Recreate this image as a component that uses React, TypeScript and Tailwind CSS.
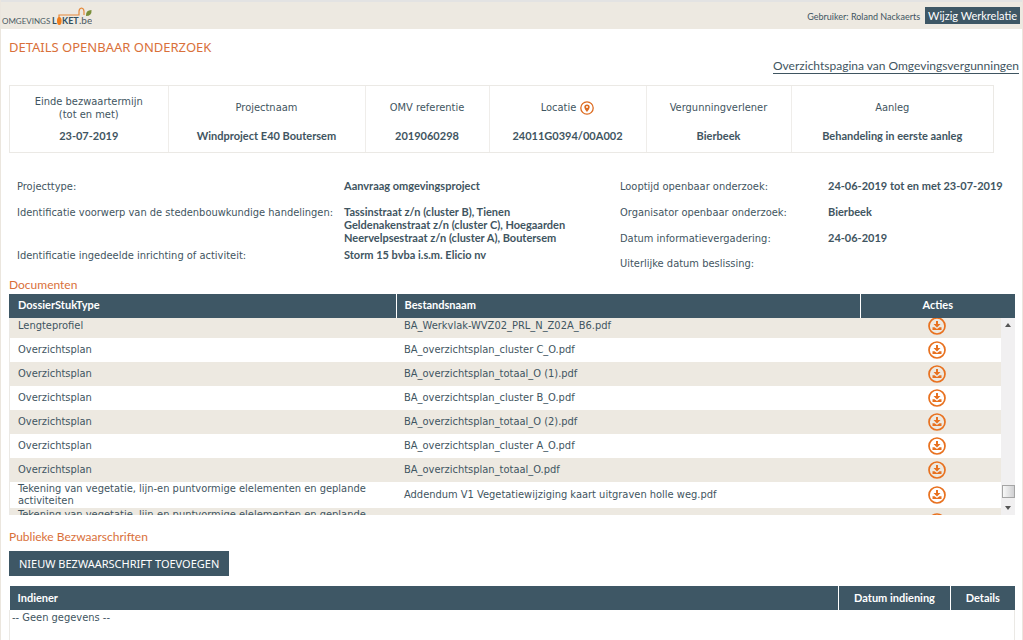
import type { ReactNode } from 'react';

const summary: { label: ReactNode; value: string; width: string }[] = [
  { label: <>Einde bezwaartermijn<br />(tot en met)</>, value: '23-07-2019', width: 'w-[158px]' },
  { label: 'Projectnaam', value: 'Windproject E40 Boutersem', width: 'w-[197px]' },
  { label: 'OMV referentie', value: '2019060298', width: 'w-[124px]' },
  {
    label: (
      <span className="inline-flex items-center gap-1">
        Locatie <PinIcon />
      </span>
    ),
    value: '24011G0394/00A002',
    width: 'w-[157px]',
  },
  { label: 'Vergunningverlener', value: 'Bierbeek', width: 'w-[145px]' },
  { label: 'Aanleg', value: 'Behandeling in eerste aanleg', width: 'w-[202px]' },
];

const documents = [
  { type: 'Lengteprofiel', name: 'BA_Werkvlak-WVZ02_PRL_N_Z02A_B6.pdf' },
  { type: 'Overzichtsplan', name: 'BA_overzichtsplan_cluster C_O.pdf' },
  { type: 'Overzichtsplan', name: 'BA_overzichtsplan_totaal_O (1).pdf' },
  { type: 'Overzichtsplan', name: 'BA_overzichtsplan_cluster B_O.pdf' },
  { type: 'Overzichtsplan', name: 'BA_overzichtsplan_totaal_O (2).pdf' },
  { type: 'Overzichtsplan', name: 'BA_overzichtsplan_cluster A_O.pdf' },
  { type: 'Overzichtsplan', name: 'BA_overzichtsplan_totaal_O.pdf' },
  {
    type: 'Tekening van vegetatie, lijn-en puntvormige elelementen en geplande activiteiten',
    name: 'Addendum V1 Vegetatiewijziging kaart uitgraven holle weg.pdf',
  },
];

function PinIcon() {
  return (
    <svg width="14" height="14" viewBox="0 0 14 14" aria-hidden="true">
      <circle cx="7" cy="7" r="6.2" fill="none" stroke="#dd6b20" strokeWidth="1.3" />
      <path fillRule="evenodd" fill="#dd6b20" d="M7 3.4a2.7 2.7 0 0 0-2.7 2.7C4.3 8 7 11 7 11s2.7-3 2.7-4.9A2.7 2.7 0 0 0 7 3.4zm0 1.7a1 1 0 1 1 0 2 1 1 0 0 1 0-2z" />
    </svg>
  );
}

function DownloadIcon() {
  return (
    <svg width="18" height="18" viewBox="0 0 18 18" aria-hidden="true">
      <circle cx="9" cy="9" r="8" fill="none" stroke="#e8711f" strokeWidth="1.7" />
      <path fill="#e8711f" d="M8 4h2v3h2.5L9 10.5 5.5 7H8z" />
      <path fill="#e8711f" d="M4.5 10.3h2L9 12l2.500-1.700h2V13h-9z" />
    </svg>
  );
}

function DownloadButton() {
  return (
    <button type="button" aria-label="Download" className="mx-auto block">
      <DownloadIcon />
    </button>
  );
}

function Logo() {
  return (
    <svg width="92" height="20" viewBox="0 0 92 20" role="img" aria-label="Omgevingsloket.be">
      <text x="2" y="17" fontSize="8" fill="#4b5b63">OMGEVINGS</text>
      <text x="52" y="17" fontSize="9" fontWeight="700" fill="#33505e">L</text>
      <text x="62" y="17" fontSize="9" fontWeight="700" fill="#33505e">KET</text>
      <text x="79" y="17" fontSize="10" fill="#4b5b63">.be</text>
      <path d="M59 12V8h20V4.5q0-3 2.5-3.5 2.5.5 2.5 3.5V8" fill="none" stroke="#e58a3c" strokeWidth="1.2" />
      <ellipse cx="59.3" cy="14" rx="2.3" ry="4" fill="#f07d1a" />
      <path d="M86 9q-.5-6 5.5-6 .5 6-5.5 6z" fill="#7a8f3a" />
    </svg>
  );
}

function Detail({ label, value, grid }: { label: string; value?: ReactNode; grid: string }) {
  return (
    <div className={`grid items-baseline ${grid}`}>
      <dt>{label}</dt>
      <dd className="font-['Lato',sans-serif] font-bold">{value}</dd>
    </div>
  );
}

const leftGrid = 'grid-cols-[327px_1fr]';
const rightGrid = 'grid-cols-[208px_1fr]';

export default function App() {
  return (
    <div className="min-h-screen border-x border-[#ebe6de] bg-white font-['DejaVu_Sans_Condensed','DejaVu_Sans',sans-serif] text-[11px] leading-[13px] text-[#3f5561]">
      <header className="flex h-[29px] items-center justify-between border-t-2 border-[#e3e3e3] bg-[#ede9e1] pr-[2px] font-['Lato',sans-serif]">
        <a href="#home" className="-ml-px pt-[2px]"><Logo /></a>
        <div className="flex items-center gap-[5px]">
          <span className="pt-[2px] text-[9px]">Gebruiker: Roland Nackaerts</span>
          <button type="button" className="h-[17px] bg-[#3e5765] px-[3px] text-[11px] text-white">Wijzig Werkrelatie</button>
        </div>
      </header>

      <main className="pl-2 pr-[7px]">
        <h1 className="pt-[10px] font-['Noto_Sans',sans-serif] text-[13px] leading-4 text-[#d9703a]">DETAILS OPENBAAR ONDERZOEK</h1>
        <div className="-mr-1 mt-1 text-right">
          <a href="#overzicht" className="inline-block border-b border-[#3f5561] font-['Lato',sans-serif] text-[12px] leading-[14px]">
            Overzichtspagina van Omgevingsvergunningen
          </a>
        </div>

        <div className="mr-[21px] mt-[11px] h-[68px] border border-[#ebe9e5]">
          <table className="w-full table-fixed text-center">
            <thead>
              <tr className="h-[43px]">
                {summary.map((s, i) => (
                  <th key={i} className={`${s.width} border-r border-[#efedea] p-0 font-normal last:border-r-0`}>{s.label}</th>
                ))}
              </tr>
            </thead>
            <tbody>
              <tr className="h-[23px] font-['Lato',sans-serif]">
                {summary.map((s, i) => (
                  <td key={i} className="whitespace-nowrap border-r border-[#efedea] p-0 pb-[10px] font-bold last:border-r-0">{s.value}</td>
                ))}
              </tr>
            </tbody>
          </table>
        </div>

        <div className="mt-[26px] grid h-[91px] grid-cols-[603fr_395fr] pl-2">
          <dl className="flex flex-col gap-3">
            <Detail grid={leftGrid} label="Projecttype:" value="Aanvraag omgevingsproject" />
            <Detail
              grid={leftGrid}
              label="Identificatie voorwerp van de stedenbouwkundige handelingen:"
              value={<>Tassinstraat z/n (cluster B), Tienen<br />Geldenakenstraat z/n (cluster C), Hoegaarden<br />Neervelpsestraat z/n (cluster A), Boutersem</>}
            />
            <div className="-mt-2">
              <Detail grid={leftGrid} label="Identificatie ingedeelde inrichting of activiteit:" value="Storm 15 bvba i.s.m. Elicio nv" />
            </div>
          </dl>
          <dl className="flex flex-col gap-3">
            <Detail grid={rightGrid} label="Looptijd openbaar onderzoek:" value="24-06-2019 tot en met 23-07-2019" />
            <Detail grid={rightGrid} label="Organisator openbaar onderzoek:" value="Bierbeek" />
            <Detail grid={rightGrid} label="Datum informatievergadering:" value="24-06-2019" />
            <Detail grid={rightGrid} label="Uiterlijke datum beslissing:" />
          </dl>
        </div>

        <h2 className="mt-[7px] pb-px font-['Lato',sans-serif] text-[12px] leading-4 text-[#d9703a]">Documenten</h2>
        <table className="w-full table-fixed bg-[#3e5765] text-left font-['Lato',sans-serif] text-white">
          <thead>
            <tr className="h-6">
              <th className="w-[387px] border-r border-white px-[9px] pb-[3px] pt-0 font-bold">DossierStukType</th>
              <th className="border-r border-white px-2 pb-[3px] pt-0 font-bold">Bestandsnaam</th>
              <th className="w-[155px] p-0 pb-[3px] text-center font-bold">Acties</th>
            </tr>
          </thead>
        </table>
        <div className="flex h-[197px] overflow-hidden border-l border-[#ebe9e5]">
          <div className="flex-1 overflow-hidden">
            <table className="-mt-1 w-full table-fixed">
              <tbody>
                {documents.map((d, i) => (
                  <tr key={i} className="h-6 odd:bg-[#ede9e1]">
                    <td className="w-[386px] py-px pl-2 pr-5 leading-[12px]">{d.type}</td>
                    <td className="px-2 py-px leading-[12px]">{d.name}</td>
                    <td className="w-[128px] p-0"><DownloadButton /></td>
                  </tr>
                ))}
                <tr className="h-[27px] bg-[#ede9e1]">
                  <td className="py-px pl-2 pr-5 align-top leading-[12px]">Tekening van vegetatie, lijn-en puntvormige elelementen en geplande</td>
                  <td className="px-2 py-px" />
                  <td className="p-0"><DownloadButton /></td>
                </tr>
              </tbody>
            </table>
          </div>
          <div className="flex w-[14px] flex-col items-center justify-between bg-[#f1f0f1] py-[5px]">
            <svg width="6" height="4" viewBox="0 0 6 4"><path d="M0 4L3 0l3 4z" fill="#555" /></svg>
            <div className="flex flex-col items-center gap-2">
              <div className="h-[13px] w-[13px] border border-[#a5a5a5] bg-linear-to-r from-[#f8f8f8] to-[#d0d0d2]" />
              <svg width="6" height="4" viewBox="0 0 6 4"><path d="M0 0h6L3 4z" fill="#555" /></svg>
            </div>
          </div>
        </div>

        <h2 className="mt-[14px] font-['Lato',sans-serif] text-[12px] leading-4 text-[#d9703a]">Publieke Bezwaarschriften</h2>
        <button type="button" className="mt-[6px] block h-[25px] bg-[#3e5765] px-[10px] font-['Noto_Sans',sans-serif] text-[11px] text-white">
          NIEUW BEZWAARSCHRIFT TOEVOEGEN
        </button>

        <table className="mt-[10px] w-full table-fixed text-left">
          <thead>
            <tr className="h-6 bg-[#3e5765] font-['Lato',sans-serif] text-white">
              <th className="border-r border-white px-2 pb-px pt-0 font-bold">Indiener</th>
              <th className="w-[112px] border-r border-white p-0 pb-px text-center font-bold">Datum indiening</th>
              <th className="w-[64px] p-0 pb-px text-center font-bold">Details</th>
            </tr>
          </thead>
          <tbody>
            <tr className="h-[30px]">
              <td colSpan={3} className="border-x border-[#ebe9e5] px-[2px] py-[1px] align-top">-- Geen gegevens --</td>
            </tr>
          </tbody>
        </table>
      </main>
    </div>
  );
}
